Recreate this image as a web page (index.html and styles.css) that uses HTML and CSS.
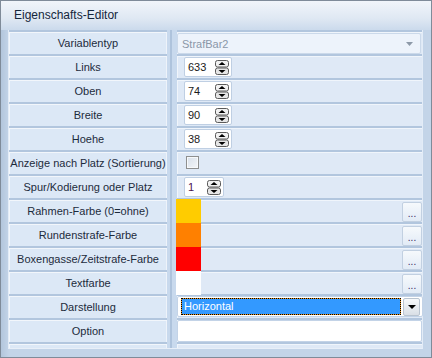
FILE: index.html
```html
<!DOCTYPE html>
<html>
  <head>
    <title>Eigenschafts-Editor</title>
    <meta charset="utf-8" />
    <link rel="stylesheet" href="styles.css">
  </head>
  <body>
    <div class="window">
      <div class="titlebar">Eigenschafts-Editor</div>
      <div class="frame">
        <div class="grid">
          <div class="label">Variablentyp</div>
          <div class="value">
            <div class="combo disabled">
              <span>StrafBar2</span>
              <svg class="arrow" width="7" height="4" viewBox="0 0 7 4"><polygon points="0,0 7,0 3.5,4" fill="#8d99a8"/></svg>
            </div>
          </div>

          <div class="label">Links</div>
          <div class="value">
            <div class="spin"><span>633</span>
              <svg class="spinbtn" width="14" height="15" viewBox="0 0 14 15">
                <rect x="0.5" y="0.5" width="13" height="6.5" rx="2" fill="#f2f2f2" stroke="#5a5a5a"/>
                <rect x="0.5" y="8" width="13" height="6.5" rx="2" fill="#e6e6e6" stroke="#5a5a5a"/>
                <polygon points="3.5,5 10.5,5 7,2" fill="#000"/>
                <polygon points="3.5,10 10.5,10 7,13" fill="#000"/>
              </svg>
            </div>
          </div>

          <div class="label">Oben</div>
          <div class="value">
            <div class="spin"><span>74</span>
              <svg class="spinbtn" width="14" height="15" viewBox="0 0 14 15">
                <rect x="0.5" y="0.5" width="13" height="6.5" rx="2" fill="#f2f2f2" stroke="#5a5a5a"/>
                <rect x="0.5" y="8" width="13" height="6.5" rx="2" fill="#e6e6e6" stroke="#5a5a5a"/>
                <polygon points="3.5,5 10.5,5 7,2" fill="#000"/>
                <polygon points="3.5,10 10.5,10 7,13" fill="#000"/>
              </svg>
            </div>
          </div>

          <div class="label">Breite</div>
          <div class="value">
            <div class="spin"><span>90</span>
              <svg class="spinbtn" width="14" height="15" viewBox="0 0 14 15">
                <rect x="0.5" y="0.5" width="13" height="6.5" rx="2" fill="#f2f2f2" stroke="#5a5a5a"/>
                <rect x="0.5" y="8" width="13" height="6.5" rx="2" fill="#e6e6e6" stroke="#5a5a5a"/>
                <polygon points="3.5,5 10.5,5 7,2" fill="#000"/>
                <polygon points="3.5,10 10.5,10 7,13" fill="#000"/>
              </svg>
            </div>
          </div>

          <div class="label">Hoehe</div>
          <div class="value">
            <div class="spin"><span>38</span>
              <svg class="spinbtn" width="14" height="15" viewBox="0 0 14 15">
                <rect x="0.5" y="0.5" width="13" height="6.5" rx="2" fill="#f2f2f2" stroke="#5a5a5a"/>
                <rect x="0.5" y="8" width="13" height="6.5" rx="2" fill="#e6e6e6" stroke="#5a5a5a"/>
                <polygon points="3.5,5 10.5,5 7,2" fill="#000"/>
                <polygon points="3.5,10 10.5,10 7,13" fill="#000"/>
              </svg>
            </div>
          </div>

          <div class="label">Anzeige nach Platz (Sortierung)</div>
          <div class="value">
            <div class="checkbox"></div>
          </div>

          <div class="label">Spur/Kodierung oder Platz</div>
          <div class="value">
            <div class="spin short"><span class="purple">1</span>
              <svg class="spinbtn" width="14" height="15" viewBox="0 0 14 15">
                <rect x="0.5" y="0.5" width="13" height="6.5" rx="2" fill="#f2f2f2" stroke="#5a5a5a"/>
                <rect x="0.5" y="8" width="13" height="6.5" rx="2" fill="#e6e6e6" stroke="#5a5a5a"/>
                <polygon points="3.5,5 10.5,5 7,2" fill="#000"/>
                <polygon points="3.5,10 10.5,10 7,13" fill="#000"/>
              </svg>
            </div>
          </div>

          <div class="label">Rahmen-Farbe (0=ohne)</div>
          <div class="value colorrow">
            <div class="swatch" style="background: #ffcc00"></div>
            <div class="dots">...</div>
          </div>

          <div class="label">Rundenstrafe-Farbe</div>
          <div class="value colorrow">
            <div class="swatch" style="background: #ff8000"></div>
            <div class="dots">...</div>
          </div>

          <div class="label">Boxengasse/Zeitstrafe-Farbe</div>
          <div class="value colorrow">
            <div class="swatch" style="background: #ff0000"></div>
            <div class="dots">...</div>
          </div>

          <div class="label">Textfarbe</div>
          <div class="value colorrow">
            <div class="swatch" style="background: #ffffff"></div>
            <div class="dots">...</div>
          </div>

          <div class="label">Darstellung</div>
          <div class="value">
            <div class="combo active">
              <div class="selected">Horizontal</div>
              <div class="dropbtn">
                <svg width="8" height="4" viewBox="0 0 8 4"><polygon points="0,0 8,0 4,4" fill="#000"/></svg>
              </div>
            </div>
          </div>

          <div class="label">Option</div>
          <div class="value">
            <div class="textbox"></div>
          </div>

          <div class="label"></div>
          <div class="value"></div>
        </div>
      </div>
    </div>
  </body>
</html>
```

FILE: styles.css
```css
body {
  margin: 0;
  background: #ffffff;
  font-family: "Liberation Sans", Arial, sans-serif;
}

.window {
  width: 430px;
  height: 356px;
  border: 1px solid #7f8b99;
  background: #bfd0e5;
}

.titlebar {
  height: 29px;
  line-height: 29px;
  padding-left: 13px;
  font-size: 12px;
  color: #15263c;
  background: linear-gradient(#f1f5fa, #dfe8f3 60%, #cbdaec);
}

.frame {
  padding: 0 8px 8px 7px;
  background: linear-gradient(to right, #b3c6dc, #c3d4e8 8px);
}

.grid {
  display: grid;
  grid-template-columns: 158px 245px;
  grid-template-rows: repeat(13, 22px) 4px;
  column-gap: 10px;
  row-gap: 2px;
  padding-top: 2px;
  border-left: 1px solid #e3ecf7;
  border-right: 1px solid #e3ecf7;
  border-bottom: 1px solid #e8eff8;
  background:
    linear-gradient(to right, transparent 158px, #c8d9ed 158px, #c8d9ed 161px, #aec3dc 161px, #aec3dc 163px, #c8d9ed 163px, #c8d9ed 168px, transparent 168px),
    #b2c6de;
}

.label {
  background: #dce8f6;
  box-shadow: inset 1px 1px #f2f6fb, inset -1px 0 #eef3fa;
  font-size: 11px;
  color: #1c2b3c;
  text-align: center;
  line-height: 22px;
  white-space: nowrap;
}

.value {
  position: relative;
  background: #dfe9f6;
  box-shadow: inset 1px 1px #f0f5fb;
  font-size: 11px;
}

.combo {
  display: flex;
  align-items: center;
  box-sizing: border-box;
}

.combo.disabled {
  margin: 1px 1px 0 0;
  height: 21px;
  padding: 0 7px 0 4px;
  justify-content: space-between;
  background: #edf3fb;
  border: 1px solid #cbd9ea;
  border-radius: 2px;
  color: #8a97a8;
}

.combo.active {
  height: 21px;
  padding: 0 2px 0 3px;
  background: #ffffff;
  border: 1px solid #c3d3e7;
  border-radius: 2px;
  margin-right: -1px;
}

.selected {
  flex: 1;
  height: 15px;
  line-height: 15px;
  padding-left: 2px;
  color: #ffffff;
  border: 1px dotted #000000;
  background: linear-gradient(#3399ff, #3399ff) padding-box, #e8901a border-box;
}

.dropbtn {
  width: 15px;
  height: 16px;
  margin-left: 2px;
  display: flex;
  align-items: center;
  justify-content: center;
  border: 1px solid #b9c4d0;
  border-radius: 2px;
  background: linear-gradient(#f7f9fb, #d9dfe6);
}

.spin {
  display: flex;
  align-items: center;
  justify-content: space-between;
  box-sizing: border-box;
  width: 48px;
  height: 20px;
  margin: 1px 0 0 7px;
  padding: 0 2px 0 3px;
  background: #ffffff;
  border: 1px solid #bfcfe3;
  border-radius: 2px;
  color: #1a1a1a;
}

.spin.short {
  width: 40px;
}

.purple {
  color: #4a1050;
}

.checkbox {
  width: 11px;
  height: 11px;
  margin: 4px 0 0 9px;
  border: 1px solid #8e8f8f;
  background: linear-gradient(135deg, #d8e0ea, #f4f6f9);
  box-shadow: inset 0 0 0 1px #f7f9fb;
}

.colorrow {
  display: flex;
  justify-content: space-between;
}

.swatch {
  width: 25px;
  height: 24px;
  margin: -1px 0 0 -1px;
}

.dots {
  box-sizing: border-box;
  width: 20px;
  height: 20px;
  margin-top: 2px;
  border: 1px solid #c2d0e1;
  border-radius: 2px;
  background: linear-gradient(#f6f9fc, #e2ebf6);
  color: #3b2a5c;
  font-size: 10px;
  line-height: 22px;
  text-align: center;
}

.textbox {
  box-sizing: border-box;
  height: 22px;
  background: #ffffff;
  border: 1px solid #c3d3e7;
  border-radius: 2px;
}
```
